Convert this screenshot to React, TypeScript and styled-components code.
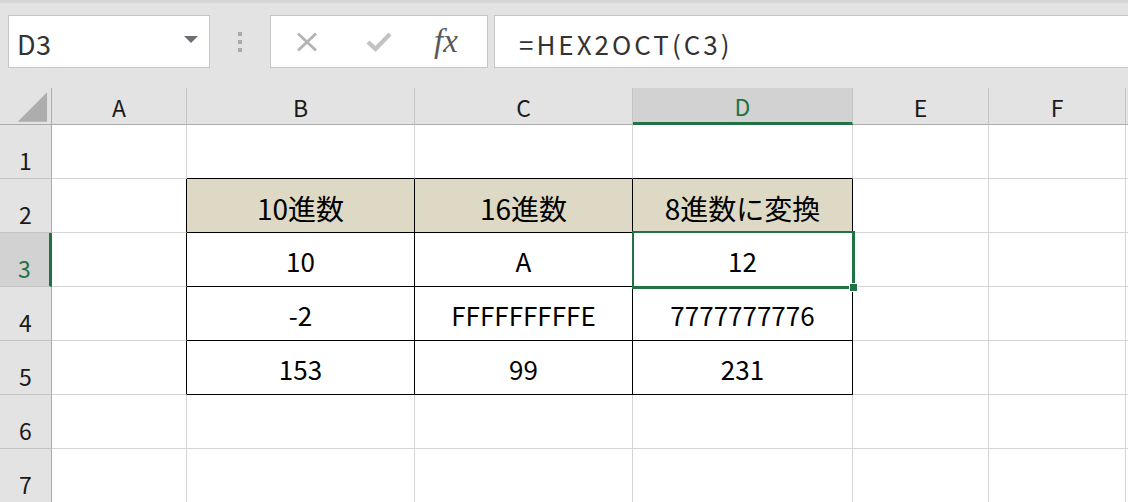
import React from "react";
import styled, { createGlobalStyle } from "styled-components";

const GREEN = "#217346";
const GRID = "#d4d4d4";
const INK = "#000";
const SHEET_FONT = `"Noto Sans CJK JP", "Noto Sans", sans-serif`;

const GlobalStyle = createGlobalStyle`
  html, body {
    margin: 0;
    padding: 0;
    background: #fff;
    overflow: hidden;
  }
  * {
    box-sizing: border-box;
  }
`;

type CellData = { text?: string; head?: boolean };

// G only peeks in at the right edge, so its letter is left off
const COLS = ["A", "B", "C", "D", "E", "F", ""];
const COL_WIDTHS = [135, 228, 218, 220, 136, 137, 120];

// table occupies B2:D5
const TABLE: Record<number, CellData[]> = {
  2: [
    { text: "10進数", head: true },
    { text: "16進数", head: true },
    { text: "8進数に変換", head: true },
  ],
  3: [{ text: "10" }, { text: "A" }, { text: "12" }],
  4: [{ text: "-2" }, { text: "FFFFFFFFFE" }, { text: "7777777776" }],
  5: [{ text: "153" }, { text: "99" }, { text: "231" }],
};

const ACTIVE = { row: 3, col: "D" };

const App = () => {
  const rows = [1, 2, 3, 4, 5, 6, 7];

  const renderCell = (row: number, colIndex: number) => {
    const col = COLS[colIndex];
    const inTableCol = colIndex >= 1 && colIndex <= 3;
    const inTableRow = row >= 2 && row <= 5;
    const data = inTableCol && inTableRow ? TABLE[row][colIndex - 1] : {};

    let right: string | undefined;
    let bottom: string | undefined;
    if (inTableRow && colIndex <= 3) right = INK;
    if (inTableCol && row >= 1 && row <= 5) bottom = INK;

    const selected = row === ACTIVE.row && col === ACTIVE.col;

    return (
      <S.Cell
        key={`${colIndex}-${row}`}
        $head={data.head}
        $right={right}
        $bottom={bottom}
        $selected={selected}
      >
        {data.text}
        {selected && (
          <>
            <S.SelectionFrame />
            <S.FillHandle />
          </>
        )}
      </S.Cell>
    );
  };

  return (
    <>
      <GlobalStyle />
      <S.Window>
        <S.TopStrip />
        <S.FormulaBar>
          <S.NameBox>
            <S.NameText>D3</S.NameText>
            <S.DropArrow />
          </S.NameBox>
          <S.Grip>
            <span />
            <span />
            <span />
          </S.Grip>
          <S.ButtonBox>
            <S.IconSlot $width={22} $gap={48}>
              <svg width="22" height="20" viewBox="0 0 22 20">
                <path
                  d="M2 1.5 L20 18.5 M20 1.5 L2 18.5"
                  stroke="#b4b4b4"
                  strokeWidth="2.8"
                  fill="none"
                />
              </svg>
            </S.IconSlot>
            <S.IconSlot $width={26} $gap={42}>
              <svg width="26" height="21" viewBox="0 0 26 21">
                <path
                  d="M2 11 L9.5 18 L24 3"
                  stroke="#c2c2c2"
                  strokeWidth="4.2"
                  fill="none"
                />
              </svg>
            </S.IconSlot>
            <S.Fx>fx</S.Fx>
          </S.ButtonBox>
          <S.FormulaInput>=HEX2OCT(C3)</S.FormulaInput>
        </S.FormulaBar>

        <S.Sheet $widths={COL_WIDTHS}>
          <S.Corner>
            <svg width="52" height="36" viewBox="0 0 52 36">
              <polygon points="18,34 48,34 48,4" fill="#adadad" />
            </svg>
          </S.Corner>
          {COLS.map((c, i) => (
            <S.ColHeader key={i} $active={c === ACTIVE.col}>
              {c}
            </S.ColHeader>
          ))}
          {rows.map((r) => (
            <React.Fragment key={r}>
              <S.RowHeader $active={r === ACTIVE.row}>{r}</S.RowHeader>
              {COLS.map((_, i) => renderCell(r, i))}
            </React.Fragment>
          ))}
        </S.Sheet>
      </S.Window>
    </>
  );
};

namespace S {
  export const Window = styled.div`
    width: 1128px;
    height: 502px;
    overflow: hidden;
    display: flex;
    flex-direction: column;
    background: #fff;
  `;

  export const TopStrip = styled.div`
    height: 3px;
    flex: none;
    background: #d6d6d6;
  `;

  export const FormulaBar = styled.div`
    height: 85px;
    flex: none;
    display: flex;
    align-items: flex-start;
    padding: 12px 0 0 8px;
    background: #e3e3e3;
  `;

  export const NameBox = styled.div`
    width: 202px;
    height: 53px;
    flex: none;
    display: flex;
    align-items: center;
    justify-content: space-between;
    padding: 0 11px 0 8px;
    background: #fff;
    border: 1px solid #c6c6c6;
  `;

  export const NameText = styled.span`
    font: 27px ${SHEET_FONT};
    color: #333;
    letter-spacing: 0.5px;
    padding-top: 3px;
  `;

  export const DropArrow = styled.span`
    width: 0;
    height: 0;
    margin-top: -4px;
    border-left: 7px solid transparent;
    border-right: 7px solid transparent;
    border-top: 7px solid #6b6f75;
  `;

  export const Grip = styled.div`
    flex: none;
    height: 53px;
    margin: 0 28px 0 28px;
    display: flex;
    flex-direction: column;
    justify-content: center;
    gap: 4px;

    span {
      display: block;
      width: 4px;
      height: 4px;
      background: #a9a9a9;
    }
  `;

  export const ButtonBox = styled.div`
    width: 218px;
    height: 53px;
    flex: none;
    display: flex;
    align-items: center;
    padding-left: 25px;
    background: #fff;
    border: 1px solid #c6c6c6;
  `;

  export const IconSlot = styled.span<{ $width: number; $gap: number }>`
    display: flex;
    width: ${(p) => p.$width}px;
    margin-right: ${(p) => p.$gap}px;
  `;

  export const Fx = styled.span`
    font: italic 33px "Liberation Serif", serif;
    color: #595959;
    margin-top: -1px;
  `;

  export const FormulaInput = styled.div`
    flex: 1;
    height: 53px;
    margin: 0 -4px 0 6px;
    display: flex;
    align-items: center;
    padding: 3px 0 0 24px;
    background: #fff;
    border: 1px solid #c6c6c6;
    font: 26px ${SHEET_FONT};
    letter-spacing: 3px;
    color: #333;
  `;

  export const Sheet = styled.div<{ $widths: number[] }>`
    flex: none;
    display: grid;
    grid-template-columns: 52px ${(p) => p.$widths.map((w) => `${w}px`).join(" ")};
    grid-template-rows: 37px repeat(7, 54px);
    background: #fff;
  `;

  export const Corner = styled.div`
    display: flex;
    background: #e3e3e3;
    border-right: 1px solid #ababab;
    border-bottom: 1px solid #ababab;
  `;

  export const ColHeader = styled.div<{ $active?: boolean }>`
    display: flex;
    align-items: center;
    justify-content: center;
    padding-top: 2px;
    font: 23px/1 ${SHEET_FONT};
    color: ${(p) => (p.$active ? GREEN : "#1a1a1a")};
    background: ${(p) => (p.$active ? "#d2d2d2" : "#e3e3e3")};
    border-right: 1px solid #c3c3c3;
    border-bottom: ${(p) =>
      p.$active ? `3px solid ${GREEN}` : "1px solid #ababab"};
  `;

  export const RowHeader = styled.div<{ $active?: boolean }>`
    display: flex;
    align-items: flex-end;
    justify-content: center;
    padding-bottom: 6px;
    font: 23px/1 ${SHEET_FONT};
    color: ${(p) => (p.$active ? GREEN : "#1a1a1a")};
    background: ${(p) => (p.$active ? "#d2d2d2" : "#e3e3e3")};
    border-right: ${(p) =>
      p.$active ? `3px solid ${GREEN}` : "1px solid #ababab"};
    border-bottom: 1px solid #c3c3c3;
  `;

  export const Cell = styled.div<{
    $head?: boolean;
    $right?: string;
    $bottom?: string;
    $selected?: boolean;
  }>`
    position: relative;
    z-index: ${(p) => (p.$selected ? 2 : "auto")};
    display: flex;
    align-items: center;
    justify-content: center;
    padding-top: ${(p) => (p.$head ? 4 : 3)}px;
    font: ${(p) => (p.$head ? 28 : 26)}px/1 ${SHEET_FONT};
    color: ${INK};
    white-space: nowrap;
    background: ${(p) => (p.$head ? "#ddd9c4" : "#fff")};
    border-right: 1px solid ${(p) => p.$right ?? GRID};
    border-bottom: 1px solid ${(p) => p.$bottom ?? GRID};
  `;

  // green frame around the active cell
  export const SelectionFrame = styled.div`
    position: absolute;
    top: -2px;
    left: -1px;
    right: -3px;
    bottom: -3px;
    border: 2px solid ${GREEN};
    border-right-width: 3px;
    border-bottom-width: 3px;
    pointer-events: none;
  `;

  export const FillHandle = styled.div`
    position: absolute;
    right: -6px;
    bottom: -6px;
    width: 9px;
    height: 9px;
    background: ${GREEN};
    border: 1px solid #fff;
  `;
}

export default App;
